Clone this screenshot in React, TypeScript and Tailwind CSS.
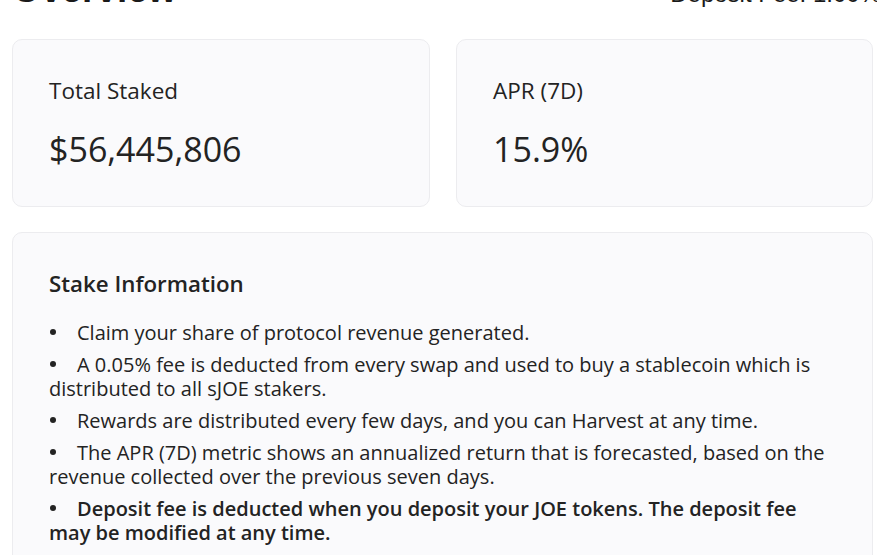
import React from "react";

const card = "rounded-[10px] border border-[#ececef] bg-[#fafafc]";

function Bullet() {
  return (
    <span className="inline-block w-[28px]">
      <span className="mb-[5px] ml-[1px] inline-block h-[6px] w-[6px] rounded-full bg-[#232323]" />
    </span>
  );
}

export default function App() {
  return (
    <div className="w-[877px] h-[555px] overflow-hidden bg-white pl-[12px] pr-[4px] text-[#232323]" style={{ fontFamily: "'Open Sans', 'Noto Sans', sans-serif" }}>
      <div className="flex items-start justify-between h-[39px]">
        <div className="mt-[-30px] text-[37px] font-bold leading-[40px] text-[#1a1a1a]" style={{ fontFamily: "'Liberation Sans', Arial, sans-serif" }}>
          Overview
        </div>
        <div className="mt-[-18px] mr-[-8px] whitespace-nowrap text-[24px] leading-[24px] text-[#1a1a1a]" style={{ fontFamily: "'Liberation Sans', Arial, sans-serif" }}>
          Deposit Fee: 1.00%
        </div>
      </div>
      <div className="flex gap-[26px]">
        <div className={`${card} w-[418px] h-[168px] px-[36px] pt-[36px]`}>
          <div className="text-[22.5px] leading-[30px]">Total Staked</div>
          <div className="mt-[23px] text-[34px] leading-[40px]">$56,445,806</div>
        </div>
        <div className={`${card} w-[417px] h-[168px] px-[36px] pt-[36px]`}>
          <div className="text-[22.5px] leading-[30px]">APR (7D)</div>
          <div className="mt-[23px] text-[34px] leading-[40px]">15.9%</div>
        </div>
      </div>
      <div className={`${card} mt-[25px] w-[861px] h-[400px] px-[36px] pt-[36px]`}>
        <div className="text-[22.3px] font-semibold leading-[30px]">Stake Information</div>
        <div className="mt-[22px] text-[20px] leading-[24px]">
          <p className="mb-[8px]"><Bullet />Claim your share of protocol revenue generated.</p>
          <p className="mb-[8px]"><Bullet />A 0.05% fee is deducted from every swap and used to buy a stablecoin which is distributed to all sJOE stakers.</p>
          <p className="mb-[8px]"><Bullet />Rewards are distributed every few days, and you can Harvest at any time.</p>
          <p className="mb-[8px]"><Bullet />The APR (7D) metric shows an annualized return that is forecasted, based on the revenue collected over the previous seven days.</p>
          <p className="mb-[8px] font-semibold"><Bullet />Deposit fee is deducted when you deposit your JOE tokens. The deposit fee may be modified at any time.</p>
        </div>
      </div>
    </div>
  );
}
